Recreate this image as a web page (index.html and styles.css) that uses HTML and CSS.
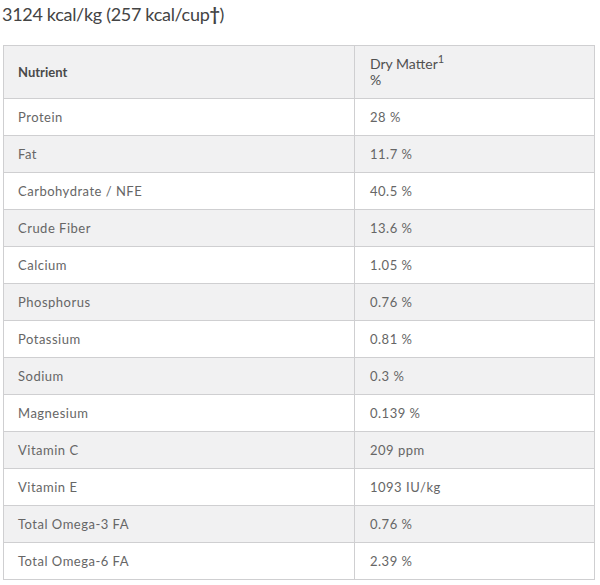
FILE: index.html
```html
<!DOCTYPE html>
<html>
<head>
<meta charset="utf-8">
<link rel="stylesheet" href="styles.css">
</head>
<body>
<div class="page">
  <h2 class="kcal">3124 kcal/kg (257 kcal/cup<b>†</b>)</h2>
  <table class="nutri">
    <thead>
      <tr><th class="c1">Nutrient</th><th class="c2">Dry Matter<sup>1</sup><br>%</th></tr>
    </thead>
    <tbody>
      <tr><td>Protein</td><td>28 %</td></tr>
      <tr><td>Fat</td><td>11.7 %</td></tr>
      <tr><td>Carbohydrate / NFE</td><td>40.5 %</td></tr>
      <tr><td>Crude Fiber</td><td>13.6 %</td></tr>
      <tr><td>Calcium</td><td>1.05 %</td></tr>
      <tr><td>Phosphorus</td><td>0.76 %</td></tr>
      <tr><td>Potassium</td><td>0.81 %</td></tr>
      <tr><td>Sodium</td><td>0.3 %</td></tr>
      <tr><td>Magnesium</td><td>0.139 %</td></tr>
      <tr><td>Vitamin C</td><td>209 ppm</td></tr>
      <tr><td>Vitamin E</td><td>1093 IU/kg</td></tr>
      <tr><td>Total Omega-3 FA</td><td>0.76 %</td></tr>
      <tr><td>Total Omega-6 FA</td><td>2.39 %</td></tr>
    </tbody>
  </table>
</div>
</body>
</html>
```
FILE: styles.css
```css
html, body { margin: 0; padding: 0; background: #fff; }
.page { padding: 0 0 0 3px; font-family: Lato, "Open Sans", sans-serif; color: #555; }
.kcal { margin: 0 0 0 -1px; padding-top: 3px; font-size: 18px; font-weight: 400; line-height: 22px; color: #444; letter-spacing: -0.3px; }
.kcal b { font-weight: 700; }
.nutri { margin-top: 20px; border-collapse: collapse; width: 592px; font-size: 13px; }
.nutri th, .nutri td { border: 1px solid #cfcfd1; text-align: left; padding: 0 0 0 14px; height: 36px; }
.nutri th { background: #f1f1f2; color: #4a4a4a; font-weight: 700; height: 52px; line-height: 16px; }
.nutri .c1 { width: 336px; }
.nutri .c2 { font-weight: 400; font-size: 14px; color: #505050; padding-left: 15px; }
.nutri sup { font-size: 11px; font-weight: 400; line-height: 0; vertical-align: 6px; }
.nutri tbody tr:nth-child(even) td { background: #f1f1f2; }
.nutri td { color: #666; letter-spacing: 0.5px; }
.nutri td + td { padding-left: 15px; }
```
